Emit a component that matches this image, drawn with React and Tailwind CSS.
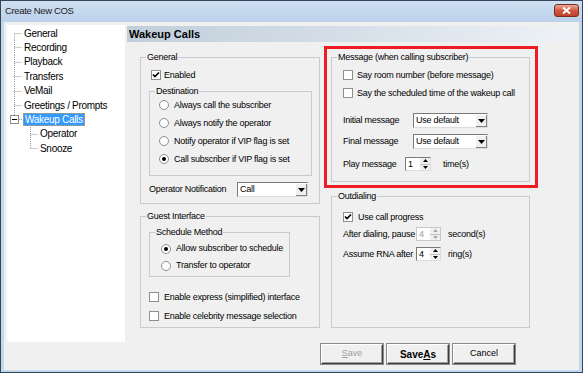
const font = "font-['Liberation_Sans',Arial,sans-serif]";

function Check({ on }) {
  return (
    <span className="flex h-[10px] w-[10px] shrink-0 items-center justify-center border border-[#8e8f8f] bg-white">
      {on && (
        <svg width="8" height="8" viewBox="0 0 8 8">
          <path d="M1 3.5 L3 5.5 L7 1.5" fill="none" stroke="#000" strokeWidth="1.7" />
        </svg>
      )}
    </span>
  );
}

function Radio({ on }) {
  return (
    <span className="flex h-[10px] w-[10px] shrink-0 items-center justify-center rounded-full border border-[#8e8f8f] bg-white">
      {on && <span className="h-[4px] w-[4px] rounded-full bg-black" />}
    </span>
  );
}

function Group({ title, className, children }) {
  return (
    <fieldset className={`border border-[#c5cbd1] ${className}`}>
      <legend className="ml-[5px] px-[1px] leading-[11px]">{title}</legend>
      {children}
    </fieldset>
  );
}

function Arrow({ up, color = "#000" }) {
  return (
    <svg width="5" height="3" viewBox="0 0 5 3">
      <path d={up ? "M0 3 L2.5 0 L5 3 Z" : "M0 0 L5 0 L2.5 3 Z"} fill={color} />
    </svg>
  );
}

function Combo({ value, w }) {
  return (
    <div className={`flex h-[15px] ${w} border border-t-[#7a7a7a] border-l-[#7a7a7a] border-r-[#dcdcdc] border-b-[#dcdcdc] bg-white`}>
      <span className="flex flex-1 items-center pl-[2px]">{value}</span>
      <span className="flex w-[12px] items-center justify-center bg-[#f0f0f0] shadow-[inset_1px_1px_0_#fff,inset_-1px_-1px_0_#808080]">
        <svg width="7" height="4" viewBox="0 0 7 4">
          <path d="M0 0 L7 0 L3.5 4 Z" fill="#000" />
        </svg>
      </span>
    </div>
  );
}

function Spin({ value, w, disabled }) {
  const c = disabled ? "#a8a8a8" : "#000";
  return (
    <div
      className={`flex h-[14px] ${w} border ${
        disabled
          ? "border-[#c8c8c8] text-[#9a9a9a]"
          : "border-t-[#7a7a7a] border-l-[#7a7a7a] border-r-[#dcdcdc] border-b-[#dcdcdc]"
      } bg-white`}
    >
      <span className="flex flex-1 items-center pl-[2px]">{value}</span>
      <span className="flex w-[10px] flex-col bg-[#f0f0f0]">
        <span className="flex flex-1 items-center justify-center border-b border-[#c0c0c0]">
          <Arrow up color={c} />
        </span>
        <span className="flex flex-1 items-center justify-center">
          <Arrow color={c} />
        </span>
      </span>
    </div>
  );
}

function Btn({ children, bold, dis }) {
  return (
    <div
      className={`flex h-[20px] w-[62px] items-center justify-center border border-t-white border-l-white border-r-[#3c3c3c] border-b-[#3c3c3c] bg-[#f0f0f0] shadow-[inset_-1px_-1px_0_#a0a0a0,0_0_0_1px_#8a8a8a] ${
        bold ? "text-[10px] font-bold" : "text-[9px]"
      } ${dis ? "text-[#a0a0a0]" : "text-black"}`}
    >
      {children}
    </div>
  );
}

const dot = { stroke: "#9a9a9a", strokeDasharray: "1 1", strokeWidth: 1, fill: "none" };
const H = 14.4;

function TreeRow({ label, kind }) {
  if (kind === "child" || kind === "lastchild") {
    return (
      <div className="flex h-[14.4px] items-center">
        <svg width="32" height={H} className="shrink-0">
          <line x1="23.5" y1="0" x2="23.5" y2={kind === "child" ? H : 7.5} style={dot} />
          <line x1="23.5" y1="7.5" x2="31" y2="7.5" style={dot} />
        </svg>
        <span className="ml-[1px]">{label}</span>
      </div>
    );
  }
  if (kind === "open") {
    return (
      <div className="flex h-[14.4px] items-center">
        <svg width="16" height={H} className="shrink-0">
          <line x1="7.5" y1="0" x2="7.5" y2="3" style={dot} />
          <rect x="3.5" y="3.5" width="8" height="8" fill="#fff" stroke="#8c8c8c" />
          <line x1="5" y1="7.5" x2="10" y2="7.5" stroke="#000" />
          <line x1="12" y1="7.5" x2="16" y2="7.5" style={dot} />
        </svg>
        <span className="border border-dotted border-[#e0a040] bg-[#3399ff] px-[1px] leading-[11px] text-white">{label}</span>
      </div>
    );
  }
  return (
    <div className="flex h-[14.4px] items-center">
      <svg width="16" height={H} className="shrink-0">
        <line x1="7.5" y1={kind === "first" ? 7.5 : 0} x2="7.5" y2={H} style={dot} />
        <line x1="7.5" y1="7.5" x2="15" y2="7.5" style={dot} />
      </svg>
      <span className="ml-[1px]">{label}</span>
    </div>
  );
}

function Tree() {
  return (
    <div className="h-full w-[118px] shrink-0 bg-white pt-[1px] text-[10px] tracking-[-0.3px]">
      <TreeRow label="General" kind="first" />
      <TreeRow label="Recording" />
      <TreeRow label="Playback" />
      <TreeRow label="Transfers" />
      <TreeRow label="VeMail" />
      <TreeRow label="Greetings / Prompts" />
      <TreeRow label="Wakeup Calls" kind="open" />
      <TreeRow label="Operator" kind="child" />
      <TreeRow label="Snooze" kind="lastchild" />
    </div>
  );
}

function RadioRow({ on, label, h }) {
  return (
    <div className={`flex ${h} items-center gap-[5px]`}>
      <Radio on={on} />
      <span>{label}</span>
    </div>
  );
}

function CheckRow({ on, label, gap, className = "" }) {
  return (
    <div className={`flex h-[14px] items-center ${gap} ${className}`}>
      <Check on={on} />
      <span>{label}</span>
    </div>
  );
}

function Right() {
  return (
    <div className="ml-[2px] mt-[1px] flex flex-1 flex-col text-[9px] leading-[11px] tracking-[-0.25px]">
      <div className="flex h-[16px] items-center bg-linear-to-r from-[#c1cedb] via-[#d6dfe8] to-[#eef2f6] pl-[2px] text-[11px] font-bold tracking-normal">
        Wakeup Calls
      </div>
      <div className="flex items-start">
        <div className="ml-[13px] w-[180px]">
          <Group title="General" className="mt-[10px] h-[152px]">
            <div className="pl-[8px]">
              <CheckRow on label="Enabled" gap="gap-[3px]" className="ml-[2px] mt-[5px]" />
              <Group title="Destination" className="mt-[4px] h-[90px] w-[163px]">
                <div className="-mt-[1px] pl-[9px]">
                  <RadioRow label="Always call the subscriber" h="h-[18px]" />
                  <RadioRow label="Always notify the operator" h="h-[18px]" />
                  <RadioRow label="Notify operator if VIP flag is set" h="h-[18px]" />
                  <RadioRow on label="Call subscriber if VIP flag is set" h="h-[18px]" />
                </div>
              </Group>
              <div className="mt-[6px] flex h-[15px] items-center">
                <span className="w-[88px]">Operator Notification</span>
                <Combo value="Call" w="w-[71px]" />
              </div>
            </div>
          </Group>
          <Group title="Guest Interface" className="mt-[7px] h-[117px]">
            <div className="pl-[8px]">
              <Group title="Schedule Method" className="mt-[5px] h-[50px] w-[141px]">
                <div className="pl-[11px] pt-[2px]">
                  <RadioRow on label="Allow subscriber to schedule" h="h-[17px]" />
                  <RadioRow label="Transfer to operator" h="h-[17px]" />
                </div>
              </Group>
              <CheckRow label="Enable express (simplified) interface" gap="gap-[5px]" className="mt-[13px]" />
              <CheckRow label="Enable celebrity message selection" gap="gap-[5px]" className="mt-[5px]" />
            </div>
          </Group>
        </div>
        <div className="ml-[4px] w-[214px]">
          <div className="mt-[4px] h-[142px] border-[3px] border-[#ed1c24]">
            <Group title="Message (when calling subscriber)" className="ml-[4px] mt-[3px] h-[130px] w-[199px]">
              <div className="pl-[11px]">
                <CheckRow label="Say room number (before message)" gap="gap-[4px]" className="mt-[5px]" />
                <CheckRow label="Say the scheduled time of the wakeup call" gap="gap-[4px]" className="mt-[4px]" />
                <div className="mt-[13px] flex h-[15px] items-center">
                  <span className="w-[70px]">Initial message</span>
                  <Combo value="Use default" w="w-[75px]" />
                </div>
                <div className="mt-[6px] flex h-[15px] items-center">
                  <span className="w-[70px]">Final message</span>
                  <Combo value="Use default" w="w-[75px]" />
                </div>
                <div className="mt-[8px] flex h-[14px] items-center">
                  <span className="w-[62px]">Play message</span>
                  <Spin value="1" w="w-[26px]" />
                  <span className="ml-[12px]">time(s)</span>
                </div>
              </div>
            </Group>
          </div>
          <Group title="Outdialing" className="ml-[7px] mt-[3px] h-[137px] w-[199px]">
            <div className="pl-[11px]">
              <CheckRow on label="Use call progress" gap="gap-[5px]" className="mt-[8px]" />
              <div className="mt-[3px] flex h-[14px] items-center">
                <span className="w-[73px]">After dialing, pause</span>
                <Spin value="4" w="w-[25px]" disabled />
                <span className="ml-[7px]">second(s)</span>
              </div>
              <div className="mt-[6px] flex h-[14px] items-center">
                <span className="w-[73px]">Assume RNA after</span>
                <Spin value="4" w="w-[25px]" />
                <span className="ml-[7px]">ring(s)</span>
              </div>
            </div>
          </Group>
        </div>
      </div>
    </div>
  );
}

export default function App() {
  return (
    <div className={`flex h-[373px] w-[583px] flex-col border border-[#34475a] bg-[#c3d7ed] text-black ${font}`}>
      <div className="flex h-[21px] items-center bg-linear-to-b from-[#cfe0f3] to-[#bbd1ea] pl-[4px]">
        <span className="text-[9.5px] tracking-[-0.35px] text-[#1a1a1a]">Create New COS</span>
        <div className="ml-auto mr-[3px] flex h-[13px] w-[25px] items-center justify-center self-start mt-[3px] rounded-[3px] border border-[#7a2e20] bg-linear-to-b from-[#e9a99a] via-[#d2573f] to-[#c0412c]">
          <svg width="9" height="7" viewBox="0 0 9 7">
            <path d="M1 0.5 L8 6.5 M8 0.5 L1 6.5" stroke="#fff" strokeWidth="2" />
          </svg>
        </div>
      </div>
      <div className="mx-[3px] mb-[2px] flex flex-1 flex-col bg-[#f0f0f0] pl-[3px] pr-[4px] pt-[3px]">
        <div className="flex h-[317px]">
          <Tree />
          <Right />
        </div>
        <div className="mt-[2px] flex gap-[4px] pl-[314px]">
          <Btn dis>
            <u>S</u>ave
          </Btn>
          <Btn bold>
            Save<u>A</u>s
          </Btn>
          <Btn>Cancel</Btn>
        </div>
      </div>
    </div>
  );
}
